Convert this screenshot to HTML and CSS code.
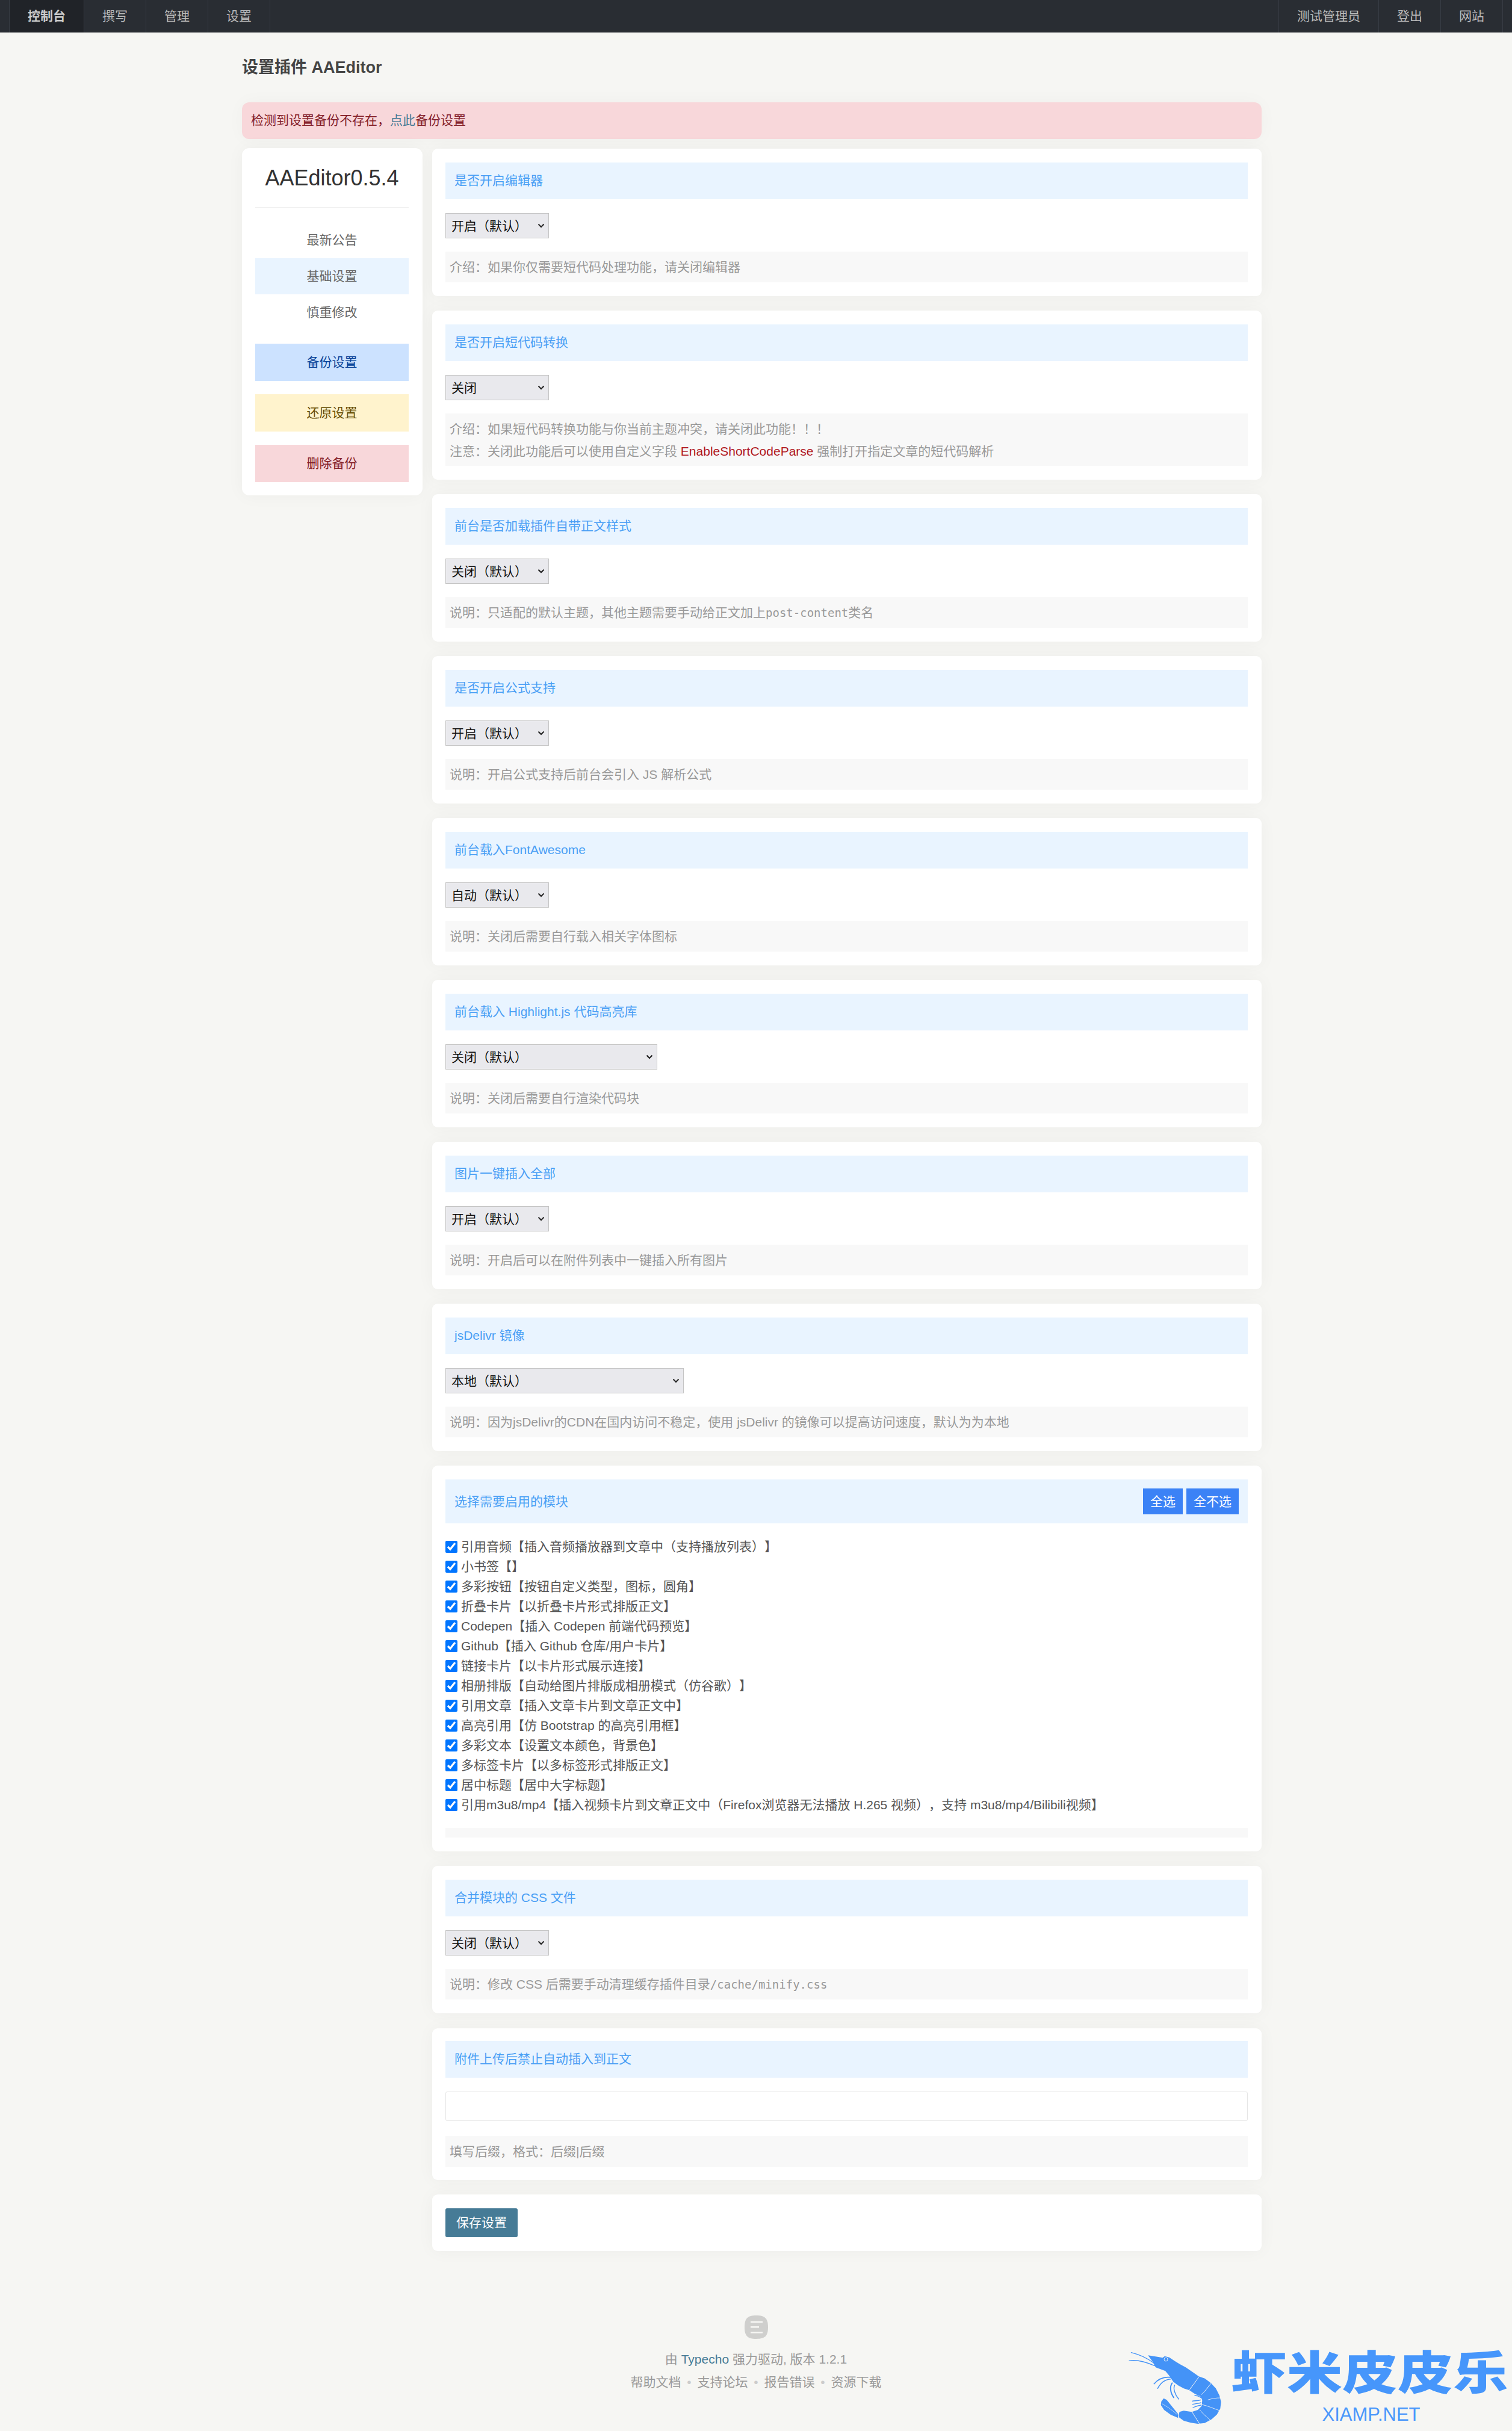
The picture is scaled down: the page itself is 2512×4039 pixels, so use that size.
FILE: index.html
```html
<!DOCTYPE html>
<html lang="zh-CN">
<head>
<meta charset="utf-8">
<title>设置插件 AAEditor</title>
<link rel="stylesheet" href="styles.css">
</head>
<body>
<nav class="topnav">
  <div class="nav-group">
    <a class="nav-item nav-active">控制台</a>
    <a class="nav-item">撰写</a>
    <a class="nav-item">管理</a>
    <a class="nav-item">设置</a>
  </div>
  <div class="nav-group">
    <a class="nav-item">测试管理员</a>
    <a class="nav-item">登出</a>
    <a class="nav-item">网站</a>
  </div>
</nav>

<main class="page">
  <h2 class="page-title">设置插件 AAEditor</h2>
  <div class="alert">检测到设置备份不存在，<a class="link">点此</a>备份设置</div>

  <div class="layout">
    <aside class="side">
      <div class="side-title">AAEditor0.5.4</div>
      <ul class="side-menu">
        <li class="side-item">最新公告</li>
        <li class="side-item side-current">基础设置</li>
        <li class="side-item">慎重修改</li>
      </ul>
      <div class="side-actions">
        <a class="side-btn btn-primary">备份设置</a>
        <a class="side-btn btn-warn">还原设置</a>
        <a class="side-btn btn-danger">删除备份</a>
      </div>
    </aside>

    <form class="content">
      <section class="card">
        <h3 class="bar">是否开启编辑器</h3>
        <select class="sel"><option>开启（默认）</option></select>
        <p class="desc">介绍：如果你仅需要短代码处理功能，请关闭编辑器</p>
      </section>

      <section class="card">
        <h3 class="bar">是否开启短代码转换</h3>
        <select class="sel"><option>关闭</option></select>
        <p class="desc desc-two">介绍：如果短代码转换功能与你当前主题冲突，请关闭此功能！！！<br>注意：关闭此功能后可以使用自定义字段 <span class="red">EnableShortCodeParse</span> 强制打开指定文章的短代码解析</p>
      </section>

      <section class="card">
        <h3 class="bar">前台是否加载插件自带正文样式</h3>
        <select class="sel"><option>关闭（默认）</option></select>
        <p class="desc">说明：只适配的默认主题，其他主题需要手动给正文加上<code class="mono">post-content</code>类名</p>
      </section>

      <section class="card">
        <h3 class="bar">是否开启公式支持</h3>
        <select class="sel"><option>开启（默认）</option></select>
        <p class="desc">说明：开启公式支持后前台会引入 JS 解析公式</p>
      </section>

      <section class="card">
        <h3 class="bar">前台载入FontAwesome</h3>
        <select class="sel"><option>自动（默认）</option></select>
        <p class="desc">说明：关闭后需要自行载入相关字体图标</p>
      </section>

      <section class="card">
        <h3 class="bar">前台载入 Highlight.js 代码高亮库</h3>
        <select class="sel sel-md"><option>关闭（默认）</option></select>
        <p class="desc">说明：关闭后需要自行渲染代码块</p>
      </section>

      <section class="card">
        <h3 class="bar">图片一键插入全部</h3>
        <select class="sel"><option>开启（默认）</option></select>
        <p class="desc">说明：开启后可以在附件列表中一键插入所有图片</p>
      </section>

      <section class="card">
        <h3 class="bar">jsDelivr 镜像</h3>
        <select class="sel sel-lg"><option>本地（默认）</option></select>
        <p class="desc">说明：因为jsDelivr的CDN在国内访问不稳定，使用 jsDelivr 的镜像可以提高访问速度，默认为为本地</p>
      </section>

      <section class="card">
        <h3 class="bar bar-tools">
          <span>选择需要启用的模块</span>
          <span class="tools"><button type="button" class="tool">全选</button><button type="button" class="tool">全不选</button></span>
        </h3>
        <ul class="checks">
          <li class="check"><input type="checkbox" class="box" checked>引用音频【插入音频播放器到文章中（支持播放列表）】</li>
          <li class="check"><input type="checkbox" class="box" checked>小书签【】</li>
          <li class="check"><input type="checkbox" class="box" checked>多彩按钮【按钮自定义类型，图标，圆角】</li>
          <li class="check"><input type="checkbox" class="box" checked>折叠卡片【以折叠卡片形式排版正文】</li>
          <li class="check"><input type="checkbox" class="box" checked>Codepen【插入 Codepen 前端代码预览】</li>
          <li class="check"><input type="checkbox" class="box" checked>Github【插入 Github 仓库/用户卡片】</li>
          <li class="check"><input type="checkbox" class="box" checked>链接卡片【以卡片形式展示连接】</li>
          <li class="check"><input type="checkbox" class="box" checked>相册排版【自动给图片排版成相册模式（仿谷歌）】</li>
          <li class="check"><input type="checkbox" class="box" checked>引用文章【插入文章卡片到文章正文中】</li>
          <li class="check"><input type="checkbox" class="box" checked>高亮引用【仿 Bootstrap 的高亮引用框】</li>
          <li class="check"><input type="checkbox" class="box" checked>多彩文本【设置文本颜色，背景色】</li>
          <li class="check"><input type="checkbox" class="box" checked>多标签卡片【以多标签形式排版正文】</li>
          <li class="check"><input type="checkbox" class="box" checked>居中标题【居中大字标题】</li>
          <li class="check"><input type="checkbox" class="box" checked>引用m3u8/mp4【插入视频卡片到文章正文中（Firefox浏览器无法播放 H.265 视频），支持 m3u8/mp4/Bilibili视频】</li>
        </ul>
        <p class="desc desc-empty"></p>
      </section>

      <section class="card card-merge">
        <h3 class="bar">合并模块的 CSS 文件</h3>
        <select class="sel"><option>关闭（默认）</option></select>
        <p class="desc">说明：修改 CSS 后需要手动清理缓存插件目录<code class="mono">/cache/minify.css</code></p>
      </section>

      <section class="card card-input">
        <h3 class="bar">附件上传后禁止自动插入到正文</h3>
        <input type="text" class="field">
        <p class="desc">填写后缀，格式：后缀|后缀</p>
      </section>

      <section class="card card-save">
        <button type="button" class="save">保存设置</button>
      </section>
    </form>
  </div>
</main>

<footer class="foot">
  <svg class="foot-logo" viewBox="0 0 39 39" width="39" height="39" aria-hidden="true">
    <path d="M19.5 0C34 0 39 5 39 19.5S34 39 19.5 39 0 34 0 19.5 5 0 19.5 0z" fill="#cfcfcd"/>
    <rect x="10" y="9.5" width="20" height="2.6" fill="#f6f6f3"/>
    <rect x="10" y="18" width="14" height="2.6" fill="#f6f6f3"/>
    <rect x="10" y="27" width="20" height="2.6" fill="#f6f6f3"/>
  </svg>
  <div class="foot-line">由 <a class="link">Typecho</a> 强力驱动, 版本 1.2.1</div>
  <div class="foot-line">帮助文档 <span class="dot">•</span> 支持论坛 <span class="dot">•</span> 报告错误 <span class="dot">•</span> 资源下载</div>
</footer>

<div class="mark">
  <svg class="shrimp" viewBox="0 0 495 405" width="165" height="135" aria-hidden="true">
    <g fill="none" stroke="#4493f7" stroke-linecap="round">
      <path d="M28 26C70 36 105 52 140 78" stroke-width="3.5"/>
      <path d="M18 67C60 60 100 72 145 92" stroke-width="4"/>
      <path d="M228 150C195 145 165 155 142 182" stroke-width="5"/>
      <path d="M225 158C200 160 175 175 160 205" stroke-width="4.5"/>
      <path d="M232 178C220 195 222 225 240 250" stroke-width="6"/>
      <path d="M245 188C236 205 245 235 265 258" stroke-width="4.5"/>
      <path d="M345 240C355 240 365 243 375 250" stroke-width="4"/>
      <path d="M332 268C345 265 360 268 375 262" stroke-width="4"/>
      <path d="M334 284C348 280 362 280 376 276" stroke-width="4"/>
      <path d="M336 300C350 294 362 290 376 288" stroke-width="4"/>
    </g>
    <path fill="#4493f7" d="M112 40L150 46 185 52 195 44 218 50 245 68 272 85 300 100 335 124 365 145 395 155 425 178 450 205 468 240 476 272 472 305 455 335 430 358 395 377 360 381 325 376 290 366 268 350 262 332 240 305 205 262 190 254 178 270 176 288 192 312 225 336 262 352 268 322 290 316 330 322 360 312 380 292 382 262 372 244 345 232 318 214 290 205 262 190 238 172 215 138 198 118 150 100 135 72z"/>
    <g fill="none" stroke="#f6f6f4">
      <path d="M366 146C350 170 335 190 318 212" stroke-width="3"/>
      <path d="M425 180C410 200 395 220 378 236" stroke-width="3"/>
      <path d="M474 252C450 252 430 255 410 262" stroke-width="2.5"/>
      <path d="M468 315C440 305 410 292 380 285" stroke-width="2.5"/>
      <path d="M420 360C400 345 385 330 370 312" stroke-width="2.5"/>
      <path d="M368 380C355 360 342 340 330 320" stroke-width="3"/>
      <path d="M268 322C262 330 262 340 264 350" stroke-width="3"/>
      <path d="M180 280C205 295 230 310 258 336" stroke-width="2"/>
      <circle cx="201" cy="60" r="9" stroke-width="2.5"/>
    </g>
  </svg>
  <div class="brand">
    <div class="brand-name">虾米皮皮乐</div>
    <div class="brand-url">XIAMP.NET</div>
  </div>
</div>
</body>
</html>
```
FILE: styles.css
```css
* { box-sizing: border-box; }
html, body { margin: 0; padding: 0; }
body {
  position: relative;
  min-height: 4039px;
  background: #f6f6f3;
  color: #444;
  font: 21px/37px "Liberation Sans", "Noto Sans CJK SC", sans-serif;
  text-spacing-trim: space-all;
}
h2, h3, p, ul { margin: 0; padding: 0; }
ul { list-style: none; }
.link { color: #467b96; }

.topnav {
  display: flex;
  justify-content: space-between;
  height: 54px;
  padding: 0 15px;
  background: #292d33;
}
.nav-group { display: flex; border-left: 1px solid #383d45; }
.nav-item {
  padding: 0 30px;
  border-right: 1px solid #383d45;
  color: #bbb;
  line-height: 54px;
}
.nav-active { background: #202328; color: #ccc; font-weight: 700; }

.page { width: 1694px; margin-left: 402px; }
.page-title {
  margin-top: 38px;
  height: 40px;
  color: #444;
  font-size: 27px;
  font-weight: 700;
  line-height: 40px;
}
.alert {
  height: 61px;
  margin-top: 38px;
  padding: 0 15px;
  border-radius: 12px;
  background: #f8d7da;
  box-shadow: 0 0 30px rgba(0, 0, 0, .03);
  color: #842029;
  line-height: 60px;
}

.layout {
  display: grid;
  grid-template-columns: 300px 1378px;
  gap: 16px;
  align-items: start;
  margin-top: 15px;
}

.side {
  height: 577px;
  padding: 0 23px 0 22px;
  border-radius: 12px;
  background: #fff;
  box-shadow: 0 0 30px rgba(0, 0, 0, .04);
}
.side-title {
  height: 99px;
  border-bottom: 1px solid #eee;
  color: #333;
  font-size: 36px;
  line-height: 100px;
  text-align: center;
}
.side-menu { margin-top: 24px; }
.side-item {
  height: 60px;
  color: #666;
  line-height: 60px;
  text-align: center;
}
.side-current { background: #e9f4ff; }
.side-actions {
  display: flex;
  flex-direction: column;
  gap: 22px;
  margin-top: 22px;
}
.side-btn { height: 62px; line-height: 62px; text-align: center; }
.btn-primary { background: #cce2ff; color: #084298; }
.btn-warn { background: #fff3cd; color: #664d03; }
.btn-danger { background: #f8d7da; color: #842029; }

.content { display: block; margin-top: 1px; }
.card {
  margin-bottom: 24px;
  padding: 23px 23px 23px 22px;
  border-radius: 9px;
  background: #fff;
  box-shadow: 0 0 30px rgba(0, 0, 0, .04);
}
.card-merge { margin-bottom: 25px; }
.bar {
  height: 61px;
  padding: 0 15px;
  background: #e9f4ff;
  color: #4a9ff5;
  font-size: 21px;
  font-weight: 400;
  line-height: 59px;
}
.bar-tools {
  display: flex;
  justify-content: space-between;
  align-items: center;
  height: 73px;
}
.tools { display: flex; gap: 6px; }
.tool {
  height: 43px;
  padding: 0 12px;
  border: 0;
  background: #3b82f6;
  color: #fff;
  font: inherit;
  line-height: 43px;
  text-spacing-trim: space-all;
}

.sel {
  display: block;
  width: 172px;
  height: 42px;
  margin-top: 23px;
  padding: 0 0 0 9px;
  border: 1.5px solid #c4c4c4;
  border-radius: 0;
  appearance: none;
  background: #e9e9ed url("data:image/svg+xml,%3Csvg xmlns='http://www.w3.org/2000/svg' width='12' height='8'%3E%3Cpath d='M1.5 1.5L6 6l4.5-4.5' fill='none' stroke='%23222' stroke-width='2'/%3E%3C/svg%3E") no-repeat right 6px center;
  color: #111;
  font: 21px "Liberation Sans", "Noto Sans CJK SC", sans-serif;
  text-spacing-trim: space-all;
}
.sel-md { width: 352px; }
.sel-lg { width: 396px; }

.desc {
  margin-top: 22px;
  padding: 7px;
  background: #f8f8f8;
  color: #999;
}
.desc-two { padding-bottom: 6px; }
.desc-empty { margin-top: 22px; padding: 8px; }
.red { color: #b0161d; }
.mono { font: 19px "DejaVu Sans Mono", monospace; }

.checks { margin-top: 22px; }
.check {
  display: flex;
  align-items: center;
  height: 33px;
  color: #555;
}
.box { flex: none; width: 20px; height: 20px; margin: 0 6px 0 0; }

.card-input { padding-top: 21px; padding-bottom: 22px; }
.field {
  display: block;
  width: 100%;
  height: 49px;
  margin-top: 23px;
  border: 1.5px solid #e6e6e6;
  border-radius: 3px;
  background: #fff;
}
.card-input .desc { margin-top: 25px; }

.card-save { margin-bottom: 0; }
.save {
  display: block;
  height: 48px;
  padding: 0 18px;
  border: 0;
  border-radius: 3px;
  background: #467b96;
  color: #fff;
  font: inherit;
  line-height: 48px;
}

.foot {
  margin-top: 107px;
  color: #999;
  line-height: 38px;
  text-align: center;
}
.foot-logo { display: block; margin: 0 auto 15px; }
.dot { margin: 0 4px; color: #ccc; }

.mark {
  position: absolute;
  left: 1870px;
  top: 3900px;
  display: flex;
  width: 642px;
  height: 135px;
}
.shrimp { flex: none; }
.brand { margin-left: 11px; color: #4a97fb; text-align: center; }
.brand-name {
  height: 100px;
  width: 470px;
  margin-top: 6px;
  margin-bottom: -6px;
  color: #4696fb;
  font-size: 92px;
  font-weight: 900;
  line-height: 90px;
  white-space: nowrap;
  transform: scaleY(.83);
  transform-origin: top;
  text-align: left;
}
.brand-url { margin-left: -6px; color: #4a97fb; font-size: 31px; line-height: 24px; }
```
